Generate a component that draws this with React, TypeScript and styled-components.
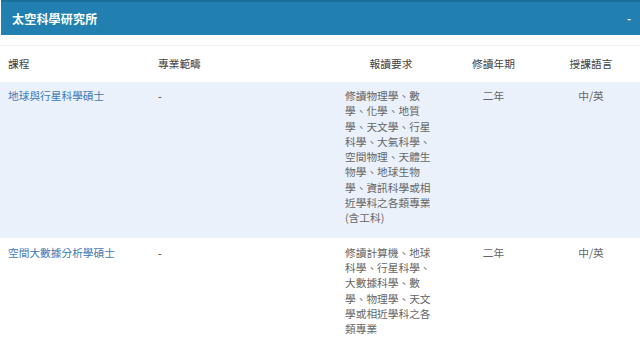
import React from "react";
import styled, { createGlobalStyle } from "styled-components";

const Global = createGlobalStyle`
  html, body { margin: 0; padding: 0; background: #ffffff; }
  body {
    font-family: "Noto Sans CJK TC", "Noto Sans", "Liberation Sans", sans-serif;
    font-size: 10.7px;
    line-height: 15.3px;
    color: #666;
  }
`;

const Page = styled.div`
  width: 640px;
  height: 348px;
  overflow: hidden;
  background: #fff;
`;

const Bar = styled.div`
  height: 35px;
  margin-left: 1px;
  background: #2280b0;
  border-top: 2px solid #1b6f9b;
  box-sizing: border-box;
  display: flex;
  align-items: center;
  justify-content: space-between;
  padding: 0 9px 0 11px;
  color: #fff;
`;

const Title = styled.div`
  font-size: 12px;
  font-weight: 700;
  letter-spacing: 0.2px;
`;

const Toggle = styled.div`
  font-size: 11px;
  font-weight: 700;
`;

const Table = styled.div`
  margin-top: 10px;
  border-top: 1px solid #f0f0f0;
`;

const Row = styled.div<{ $bg?: string; $pt?: number; $pb?: number; $h?: number }>`
  display: grid;
  grid-template-columns: 150px 187px 108px 97px 98px;
  background: ${(p) => p.$bg ?? "#fff"};
  padding-top: ${(p) => p.$pt ?? 0}px;
  padding-bottom: ${(p) => p.$pb ?? 0}px;
  ${(p) => (p.$h ? `height: ${p.$h}px; align-items: center; box-sizing: border-box;` : "")}
`;

const Cell = styled.div<{ $align?: string; $color?: string }>`
  padding: 0 8px;
  text-align: ${(p) => p.$align ?? "left"};
  color: ${(p) => p.$color ?? "#666"};
  line-break: strict;
`;

const HeadCell = styled(Cell)`
  color: #444;
`;

const Link = styled.span`
  color: #4079b6;
`;

const rows = [
  {
    name: "地球與行星科學碩士",
    scope: "-",
    req: "修讀物理學、數學、化學、地質學、天文學、行星科學、大氣科學、空間物理、天體生物學、地球生物學、資訊科學或相近學科之各類專業(含工科)",
    years: "二年",
    lang: "中/英",
    bg: "#eaf1fa",
    pt: 6,
    pb: 12,
  },
  {
    name: "空間大數據分析學碩士",
    scope: "-",
    req: "修讀計算機、地球科學、行星科學、大數據科學、數學、物理學、天文學或相近學科之各類專業",
    years: "二年",
    lang: "中/英",
    bg: "#fff",
    pt: 7,
    pb: 12,
  },
];

export default function App() {
  return (
    <Page>
      <Global />
      <Bar>
        <Title>太空科學研究所</Title>
        <Toggle>-</Toggle>
      </Bar>
      <Table>
        <Row $h={36}>
          <HeadCell>課程</HeadCell>
          <HeadCell>專業範疇</HeadCell>
          <HeadCell $align="center">報讀要求</HeadCell>
          <HeadCell $align="center">修讀年期</HeadCell>
          <HeadCell $align="center">授課語言</HeadCell>
        </Row>
        {rows.map((r) => (
          <Row key={r.name} $bg={r.bg} $pt={r.pt} $pb={r.pb}>
            <Cell>
              <Link>{r.name}</Link>
            </Cell>
            <Cell $color="#333">{r.scope}</Cell>
            <Cell>{r.req}</Cell>
            <Cell $align="center">{r.years}</Cell>
            <Cell $align="center">{r.lang}</Cell>
          </Row>
        ))}
      </Table>
    </Page>
  );
}
